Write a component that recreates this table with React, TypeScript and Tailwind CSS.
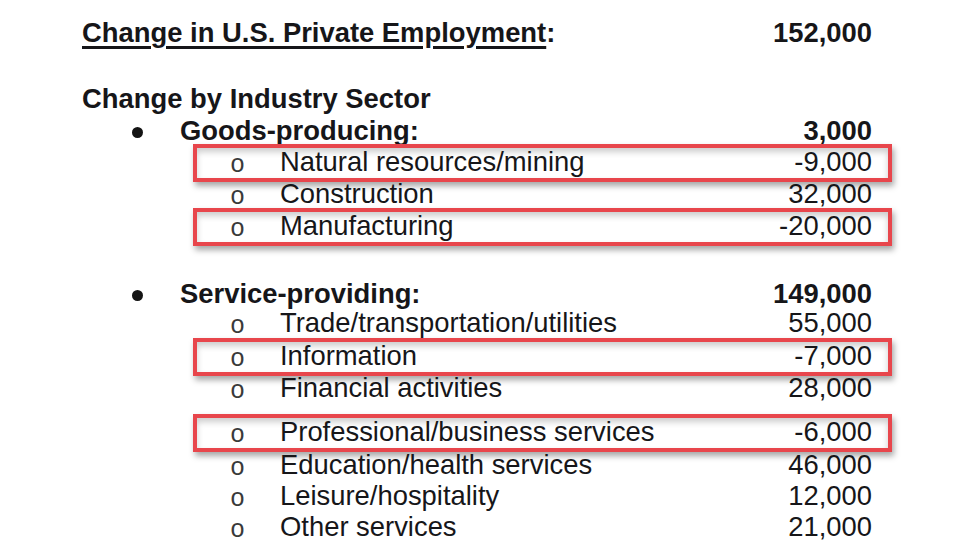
const RED = 'border-[#e8464c]';

type Item = { label: string; value: string; mark?: boolean; mt?: string };

const goods: Item[] = [
  { label: 'Natural resources/mining', value: '-9,000', mark: true },
  { label: 'Construction', value: '32,000' },
  { label: 'Manufacturing', value: '-20,000', mark: true },
];

const services: Item[] = [
  { label: 'Trade/transportation/utilities', value: '55,000', mt: '-mt-[3px]' },
  { label: 'Information', value: '-7,000', mark: true, mt: 'mt-[1px]' },
  { label: 'Financial activities', value: '28,000' },
  { label: 'Professional/business services', value: '-6,000', mark: true, mt: 'mt-[12px]' },
  { label: 'Education/health services', value: '46,000', mt: 'mt-[1px]' },
  { label: 'Leisure/hospitality', value: '12,000', mt: '-mt-[1px]' },
  { label: 'Other services', value: '21,000', mt: '-mt-[1px]' },
];

function SubRow({ item }: { item: Item }) {
  return (
    <div className={`relative flex items-center h-[32px] ${item.mt ?? ''}`}>
      {item.mark && (
        // red annotation box drawn over the row
        <div
          className={`absolute left-[111px] -right-[20px] -top-[2px] -bottom-[4px] border-[4px] ${RED} shadow-[inset_0_4px_6px_rgba(0,0,0,0.2),2px_4px_6px_rgba(0,0,0,0.35)]`}
        />
      )}
      <span className="relative w-[16px] ml-[148px] mt-[6px] text-[25px] text-[#3a3a3a] leading-none font-['Liberation_Mono',monospace]">
        o
      </span>
      <span className="relative ml-[34px] flex-1">{item.label}</span>
      <span className="relative">{item.value}</span>
    </div>
  );
}

function GroupRow({ label, value, mt }: { label: string; value: string; mt?: string }) {
  return (
    <div className={`flex items-center h-[32px] font-bold ${mt ?? ''}`}>
      <span className="ml-[50px] w-[11px] h-[11px] rounded-full bg-[#141414] mt-[2px]" />
      <span className="ml-[37px] flex-1">{label}</span>
      <span>{value}</span>
    </div>
  );
}

export default function App() {
  return (
    <div className="w-[968px] h-[558px] bg-white overflow-hidden text-[#161619] text-[27.4px] leading-[32px] font-['Liberation_Sans',Arial,sans-serif]">
      <div className="ml-[82px] w-[790px] pt-[17px]">
        <div className="flex items-center h-[32px] font-bold">
          <span className="flex-1">
            <span className="underline decoration-[2.5px] underline-offset-[4px]">Change in U.S. Private Employment</span>:
          </span>
          <span>152,000</span>
        </div>

        <div className="flex items-center h-[32px] font-bold mt-[34px]">Change by Industry Sector</div>

        <GroupRow label="Goods-producing:" value="3,000" />
        <div className="-mt-[1px]">
          {goods.map((g) => (
            <SubRow key={g.label} item={g} />
          ))}
        </div>

        <GroupRow label="Service-providing:" value="149,000" mt="mt-[36px]" />
        {services.map((s) => (
          <SubRow key={s.label} item={s} />
        ))}
      </div>
    </div>
  );
}
